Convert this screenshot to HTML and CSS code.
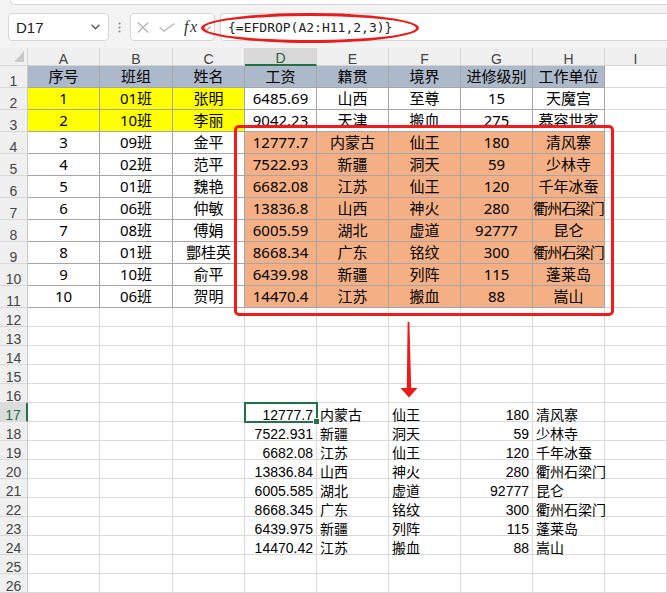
FILE: index.html
```html
<!DOCTYPE html>
<html lang="zh-CN">
<head>
<meta charset="utf-8">
<title>EFDROP</title>
<link rel="stylesheet" href="styles.css">
</head>
<body>
<div class="app">
  <div class="topbar">
    <div class="ribbon"></div>
    <div class="fbar">
      <div class="namebox"><span>D17</span><svg width="9" height="6" viewBox="0 0 9 6"><polyline points="0.6,0.8 4.5,4.8 8.4,0.8" fill="none" stroke="#555" stroke-width="1.3"/></svg></div>
      <div class="grip"><svg width="3" height="11" viewBox="0 0 3 11"><circle cx="1.5" cy="1.5" r="1.1" fill="#8a8a8a"/><circle cx="1.5" cy="5.5" r="1.1" fill="#8a8a8a"/><circle cx="1.5" cy="9.5" r="1.1" fill="#8a8a8a"/></svg></div>
      <div class="fxbox">
        <svg class="ic-x" width="12" height="11" viewBox="0 0 12 11"><path d="M0.8 0.5 L11.2 10.5 M11.2 0.5 L0.8 10.5" fill="none" stroke="#b3b3b3" stroke-width="1.2"/></svg>
        <svg class="ic-ok" width="16" height="9" viewBox="0 0 16 9"><polyline points="0.6,4.2 5,8.3 15.4,0.6" fill="none" stroke="#b3b3b3" stroke-width="1.2"/></svg>
        <span class="fx">fx</span>
        <svg class="ic-dn" width="9" height="5" viewBox="0 0 9 5"><polyline points="0.5,0.5 4.5,4.5 8.5,0.5" fill="none" stroke="#a0a0a0" stroke-width="1.1"/></svg>
      </div>
      <div class="formula">{=EFDROP(A2:H11,2,3)}</div>
    </div>
    <div class="ring"></div>
  </div>

  <div class="sheet">
    <div class="row hdr">
      <div class="c h corner"><svg width="10" height="11" viewBox="0 0 10 11"><polygon points="10,0 10,11 0,11" fill="#c9c9c9"/></svg></div>
      <div class="c h">A</div><div class="c h">B</div><div class="c h">C</div><div class="c h hsel">D</div><div class="c h">E</div><div class="c h">F</div><div class="c h">G</div><div class="c h">H</div><div class="c h">I</div>
    </div>

    <div class="row"><div class="c rh">1</div><div class="c t th">序号</div><div class="c t th">班组</div><div class="c t th">姓名</div><div class="c t th">工资</div><div class="c t th">籍贯</div><div class="c t th">境界</div><div class="c t th">进修级别</div><div class="c t th">工作单位</div><div class="c"></div></div>
    <div class="row"><div class="c rh">2</div><div class="c t y">1</div><div class="c t y">01班</div><div class="c t y">张明</div><div class="c t">6485.69</div><div class="c t">山西</div><div class="c t">至尊</div><div class="c t">15</div><div class="c t">天魔宫</div><div class="c"></div></div>
    <div class="row"><div class="c rh">3</div><div class="c t y">2</div><div class="c t y">10班</div><div class="c t y">李丽</div><div class="c t">9042.23</div><div class="c t">天津</div><div class="c t">搬血</div><div class="c t">275</div><div class="c t">慕容世家</div><div class="c"></div></div>
    <div class="row"><div class="c rh">4</div><div class="c t">3</div><div class="c t">09班</div><div class="c t">金平</div><div class="c t o">12777.7</div><div class="c t o">内蒙古</div><div class="c t o">仙王</div><div class="c t o">180</div><div class="c t o">清风寨</div><div class="c"></div></div>
    <div class="row"><div class="c rh">5</div><div class="c t">4</div><div class="c t">02班</div><div class="c t">范平</div><div class="c t o">7522.93</div><div class="c t o">新疆</div><div class="c t o">洞天</div><div class="c t o">59</div><div class="c t o">少林寺</div><div class="c"></div></div>
    <div class="row"><div class="c rh">6</div><div class="c t">5</div><div class="c t">01班</div><div class="c t">魏艳</div><div class="c t o">6682.08</div><div class="c t o">江苏</div><div class="c t o">仙王</div><div class="c t o">120</div><div class="c t o">千年冰蚕</div><div class="c"></div></div>
    <div class="row"><div class="c rh">7</div><div class="c t">6</div><div class="c t">06班</div><div class="c t">仲敏</div><div class="c t o">13836.8</div><div class="c t o">山西</div><div class="c t o">神火</div><div class="c t o">280</div><div class="c t o"><span class="tight">衢州石梁门</span></div><div class="c"></div></div>
    <div class="row"><div class="c rh">8</div><div class="c t">7</div><div class="c t">08班</div><div class="c t">傅娟</div><div class="c t o">6005.59</div><div class="c t o">湖北</div><div class="c t o">虚道</div><div class="c t o">92777</div><div class="c t o">昆仑</div><div class="c"></div></div>
    <div class="row"><div class="c rh">9</div><div class="c t">8</div><div class="c t">01班</div><div class="c t">酆桂英</div><div class="c t o">8668.34</div><div class="c t o">广东</div><div class="c t o">铭纹</div><div class="c t o">300</div><div class="c t o"><span class="tight">衢州石梁门</span></div><div class="c"></div></div>
    <div class="row"><div class="c rh">10</div><div class="c t">9</div><div class="c t">10班</div><div class="c t">俞平</div><div class="c t o">6439.98</div><div class="c t o">新疆</div><div class="c t o">列阵</div><div class="c t o">115</div><div class="c t o">蓬莱岛</div><div class="c"></div></div>
    <div class="row"><div class="c rh">11</div><div class="c t">10</div><div class="c t">06班</div><div class="c t">贺明</div><div class="c t o">14470.4</div><div class="c t o">江苏</div><div class="c t o">搬血</div><div class="c t o">88</div><div class="c t o">嵩山</div><div class="c"></div></div>

    <div class="row short"><div class="c rh">12</div><div class="c"></div><div class="c"></div><div class="c"></div><div class="c"></div><div class="c"></div><div class="c"></div><div class="c"></div><div class="c"></div><div class="c"></div></div>
    <div class="row short"><div class="c rh">13</div><div class="c"></div><div class="c"></div><div class="c"></div><div class="c"></div><div class="c"></div><div class="c"></div><div class="c"></div><div class="c"></div><div class="c"></div></div>
    <div class="row short"><div class="c rh">14</div><div class="c"></div><div class="c"></div><div class="c"></div><div class="c"></div><div class="c"></div><div class="c"></div><div class="c"></div><div class="c"></div><div class="c"></div></div>
    <div class="row short"><div class="c rh">15</div><div class="c"></div><div class="c"></div><div class="c"></div><div class="c"></div><div class="c"></div><div class="c"></div><div class="c"></div><div class="c"></div><div class="c"></div></div>
    <div class="row short"><div class="c rh">16</div><div class="c"></div><div class="c"></div><div class="c"></div><div class="c"></div><div class="c"></div><div class="c"></div><div class="c"></div><div class="c"></div><div class="c"></div></div>

    <div class="row short"><div class="c rh rsel">17</div><div class="c"></div><div class="c"></div><div class="c"></div><div class="c r sel">12777.7</div><div class="c l">内蒙古</div><div class="c l">仙王</div><div class="c r">180</div><div class="c l">清风寨</div><div class="c"></div></div>
    <div class="row short"><div class="c rh">18</div><div class="c"></div><div class="c"></div><div class="c"></div><div class="c r">7522.931</div><div class="c l">新疆</div><div class="c l">洞天</div><div class="c r">59</div><div class="c l">少林寺</div><div class="c"></div></div>
    <div class="row short"><div class="c rh">19</div><div class="c"></div><div class="c"></div><div class="c"></div><div class="c r">6682.08</div><div class="c l">江苏</div><div class="c l">仙王</div><div class="c r">120</div><div class="c l">千年冰蚕</div><div class="c"></div></div>
    <div class="row short"><div class="c rh">20</div><div class="c"></div><div class="c"></div><div class="c"></div><div class="c r">13836.84</div><div class="c l">山西</div><div class="c l">神火</div><div class="c r">280</div><div class="c l">衢州石梁门</div><div class="c"></div></div>
    <div class="row short"><div class="c rh">21</div><div class="c"></div><div class="c"></div><div class="c"></div><div class="c r">6005.585</div><div class="c l">湖北</div><div class="c l">虚道</div><div class="c r">92777</div><div class="c l">昆仑</div><div class="c"></div></div>
    <div class="row short"><div class="c rh">22</div><div class="c"></div><div class="c"></div><div class="c"></div><div class="c r">8668.345</div><div class="c l">广东</div><div class="c l">铭纹</div><div class="c r">300</div><div class="c l">衢州石梁门</div><div class="c"></div></div>
    <div class="row short"><div class="c rh">23</div><div class="c"></div><div class="c"></div><div class="c"></div><div class="c r">6439.975</div><div class="c l">新疆</div><div class="c l">列阵</div><div class="c r">115</div><div class="c l">蓬莱岛</div><div class="c"></div></div>
    <div class="row short"><div class="c rh">24</div><div class="c"></div><div class="c"></div><div class="c"></div><div class="c r">14470.42</div><div class="c l">江苏</div><div class="c l">搬血</div><div class="c r">88</div><div class="c l">嵩山</div><div class="c"></div></div>

    <div class="row short"><div class="c rh">25</div><div class="c"></div><div class="c"></div><div class="c"></div><div class="c"></div><div class="c"></div><div class="c"></div><div class="c"></div><div class="c"></div><div class="c"></div></div>
    <div class="row short"><div class="c rh">26</div><div class="c"></div><div class="c"></div><div class="c"></div><div class="c"></div><div class="c"></div><div class="c"></div><div class="c"></div><div class="c"></div><div class="c"></div></div>

    <div class="redbox"></div>
    <svg class="arrow" width="22" height="80" viewBox="0 0 22 80"><polygon points="9.6,2 11.4,2 13.2,68 19.5,68 11,77.5 2.5,68 8.8,68" fill="#f01818"/></svg>
  </div>
</div>
</body>
</html>
```

FILE: styles.css
```css
html, body {
  margin: 0;
  padding: 0;
  background: #ffffff;
}

.app {
  position: relative;
  width: 667px;
  height: 593px;
  overflow: hidden;
  font-family: "Noto Sans", "Noto Sans CJK SC", sans-serif;
  color: #000;
}

/* ---------- top / formula bar ---------- */
.topbar {
  height: 48px;
  background: #f3f3f3;
}

.ribbon {
  margin-left: 10px;
  height: 5px;
  background: #ffffff;
  border-left: 1px solid #d6d6d6;
  border-bottom: 1px solid #d6d6d6;
  border-bottom-left-radius: 6px;
  box-sizing: border-box;
}

.fbar {
  display: flex;
  align-items: center;
  height: 28px;
  margin-top: 8px;
  padding-left: 8px;
}

.namebox {
  width: 101px;
  height: 28px;
  box-sizing: border-box;
  background: #fff;
  border: 1px solid #d6d6d6;
  border-radius: 4px;
  display: flex;
  align-items: center;
  justify-content: space-between;
  padding: 0 8px 0 7px;
  font: 15px "Liberation Sans", sans-serif;
  color: #222;
}

.grip {
  width: 21px;
  display: flex;
  justify-content: center;
  align-items: center;
}

.fxbox {
  width: 85px;
  height: 28px;
  box-sizing: border-box;
  background: #fff;
  border: 1px solid #d6d6d6;
  border-radius: 4px;
  display: flex;
  align-items: center;
  padding-left: 6px;
}

.ic-x { margin-right: 10px; }
.ic-ok { margin-right: 9px; margin-top: 1px; }
.fx {
  font: italic 16px "Liberation Serif", serif;
  letter-spacing: 1.5px;
  color: #333;
  margin-right: 3px;
}
.ic-dn { margin-top: 3px; }

.formula {
  flex: 1 0 auto;
  margin-left: 5px;
  height: 28px;
  box-sizing: border-box;
  background: #fff;
  border: 1px solid #d6d6d6;
  border-right: 0;
  border-radius: 4px 0 0 4px;
  display: flex;
  align-items: center;
  padding-left: 7px;
  font: 13px "DejaVu Sans Mono", "Liberation Mono", monospace;
  color: #222;
}

.ring {
  position: absolute;
  left: 201px;
  top: 13px;
  width: 218px;
  height: 30px;
  box-sizing: border-box;
  border: 3px solid #ea1c1c;
  border-radius: 50%;
}

/* ---------- sheet ---------- */
.sheet {
  position: relative;
}

.row {
  display: grid;
  grid-template-columns: 28px 72px 73px 72px 72px 72px 72px 72px 72px 62px;
  height: 22px;
}

.row.hdr { height: 18px; }
.row.short { height: 19px; }

.c {
  box-sizing: border-box;
  border-right: 1px solid #dadada;
  border-bottom: 1px solid #dadada;
  display: flex;
  align-items: center;
  justify-content: center;
  overflow: hidden;
  white-space: nowrap;
  font-size: 15px;
  line-height: 21px;
}

.c span { flex: none; }
.c .tight { letter-spacing: -0.9px; }

/* headers */
.h {
  background: #f0f0f0;
  color: #444;
  border-color: #d4d4d4;
  font: 14px "Liberation Sans", sans-serif;
  line-height: 12px;
  align-items: flex-end;
}

.corner {
  justify-content: flex-end;
  padding: 0 3px 3px 0;
}

.hsel {
  background: #d9d9d9;
  color: #2b5b3f;
  border-bottom: 2px solid #217346;
}

.rh {
  background: #f0f0f0;
  color: #444;
  border-right-color: #c8c8c8;
  border-bottom-color: #d8d8d8;
  font: 14px "Liberation Sans", sans-serif;
  line-height: 12px;
  align-items: flex-end;
}

.rsel {
  background: #dcdcdc;
  color: #217346;
  border-right: 2px solid #217346;
}

/* table */
.t { border-color: #a6a6a6; }
.th { background: #acb9ca; }
.y { background: #ffff00; }
.o { background: #f4b084; }

/* spilled results */
.short .c {
  font: 14px "Liberation Sans", "Noto Sans CJK SC", sans-serif;
  line-height: 12px;
  align-items: flex-end;
  overflow: visible;
}

.short .rh {
  overflow: hidden;
}

.r { justify-content: flex-end; padding-right: 3px; }
.l { justify-content: flex-start; padding-left: 3px; }

.sel {
  position: relative;
  outline: 2px solid #217346;
  outline-offset: -1px;
}

.sel::after {
  content: "";
  position: absolute;
  right: -4px;
  bottom: -4px;
  width: 5px;
  height: 5px;
  background: #217346;
  border: 1px solid #fff;
}

/* annotations */
.redbox {
  position: absolute;
  left: 234px;
  top: 77px;
  width: 380px;
  height: 191px;
  box-sizing: border-box;
  border: 3px solid #f01c1c;
  border-radius: 5px;
}

.arrow {
  position: absolute;
  left: 398px;
  top: 272px;
}
```
